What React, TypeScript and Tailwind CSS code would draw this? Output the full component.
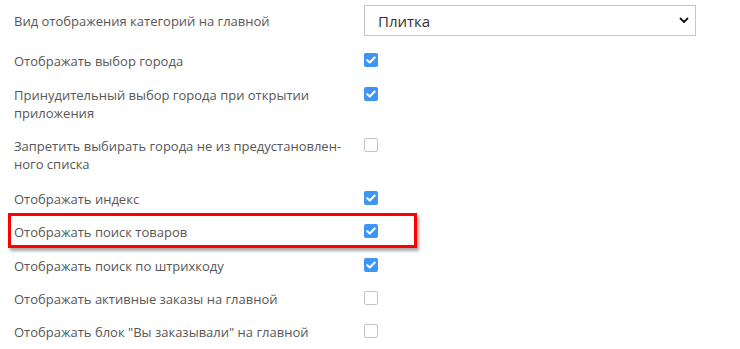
import React from "react";

type Row = { label: React.ReactNode; checked: boolean; pb: string; highlight?: boolean };

const rows: Row[] = [
  { label: "Отображать выбор города", checked: true, pb: "pb-[16px]" },
  { label: "Принудительный выбор города при открытии приложения", checked: true, pb: "pb-[15px]" },
  { label: "Запретить выбирать города не из предустановлен\u00ADного списка", checked: false, pb: "pb-[17px]" },
  { label: "Отображать индекс", checked: true, pb: "pb-[15px]" },
  { label: "Отображать поиск товаров", checked: true, pb: "pb-[16px]", highlight: true },
  { label: "Отображать поиск по штрихкоду", checked: true, pb: "pb-[15px]" },
  { label: "Отображать активные заказы на главной", checked: false, pb: "pb-[15px]" },
  { label: 'Отображать блок "Вы заказывали" на главной', checked: false, pb: "pb-[15px]" },
];

function Box({ checked }: { checked: boolean }) {
  if (checked) {
    return (
      <div className="w-[14px] h-[14px] rounded-[2px] bg-[#3d95f6] flex items-center justify-center">
        <svg width="10" height="8" viewBox="0 0 10 8">
          <path d="M1.3 4.2 L3.8 6.5 L8.7 1.5" fill="none" stroke="#fff" strokeWidth="2.1" strokeLinecap="round" strokeLinejoin="round" />
        </svg>
      </div>
    );
  }
  return <div className="w-[14px] h-[14px] rounded-[2px] border border-[#c4c4c4] bg-white box-border" />;
}

export default function App() {
  return (
    <div
      className="w-[740px] h-[349px] bg-white overflow-hidden pt-[5px] text-[#575757]"
      style={{ fontFamily: '"Open Sans", "Noto Sans", sans-serif' }}
    >
      <div className="flex items-center mb-[16px]">
        <div className="w-[350px] pl-[14px] text-[13px] leading-[18px]">Вид отображения категорий на главной</div>
        <div className="ml-[14px] w-[332px] h-[31px] border border-[#c6c6c6] box-border flex items-center justify-between pl-[13px] pr-[6px]">
          <span className="text-[15px] text-[#333] leading-[20px]">Плитка</span>
          <svg width="10" height="7" viewBox="0 0 10 7" className="mr-[0px]">
            <path d="M1.5 1.5 L5 5 L8.5 1.5" fill="none" stroke="#111" strokeWidth="1.8" strokeLinecap="round" strokeLinejoin="round" />
          </svg>
        </div>
      </div>
      {rows.map((r, i) => (
        <div key={i} className={`relative flex items-start ${r.pb}`}>
          <div className="w-[350px] pl-[14px] pr-[8px] text-[13px] leading-[18px]" style={{ hyphens: "manual" }}>
            {r.label}
          </div>
          <div className="ml-[14px] mt-[1px]">
            <Box checked={r.checked} />
          </div>
          {r.highlight && (
            <div className="absolute left-[8px] top-[-10px] w-[409px] h-[35px] border-[3px] border-[#ff0000] shadow-[2px_3px_3px_rgba(0,0,0,0.35)]" />
          )}
        </div>
      ))}
    </div>
  );
}
